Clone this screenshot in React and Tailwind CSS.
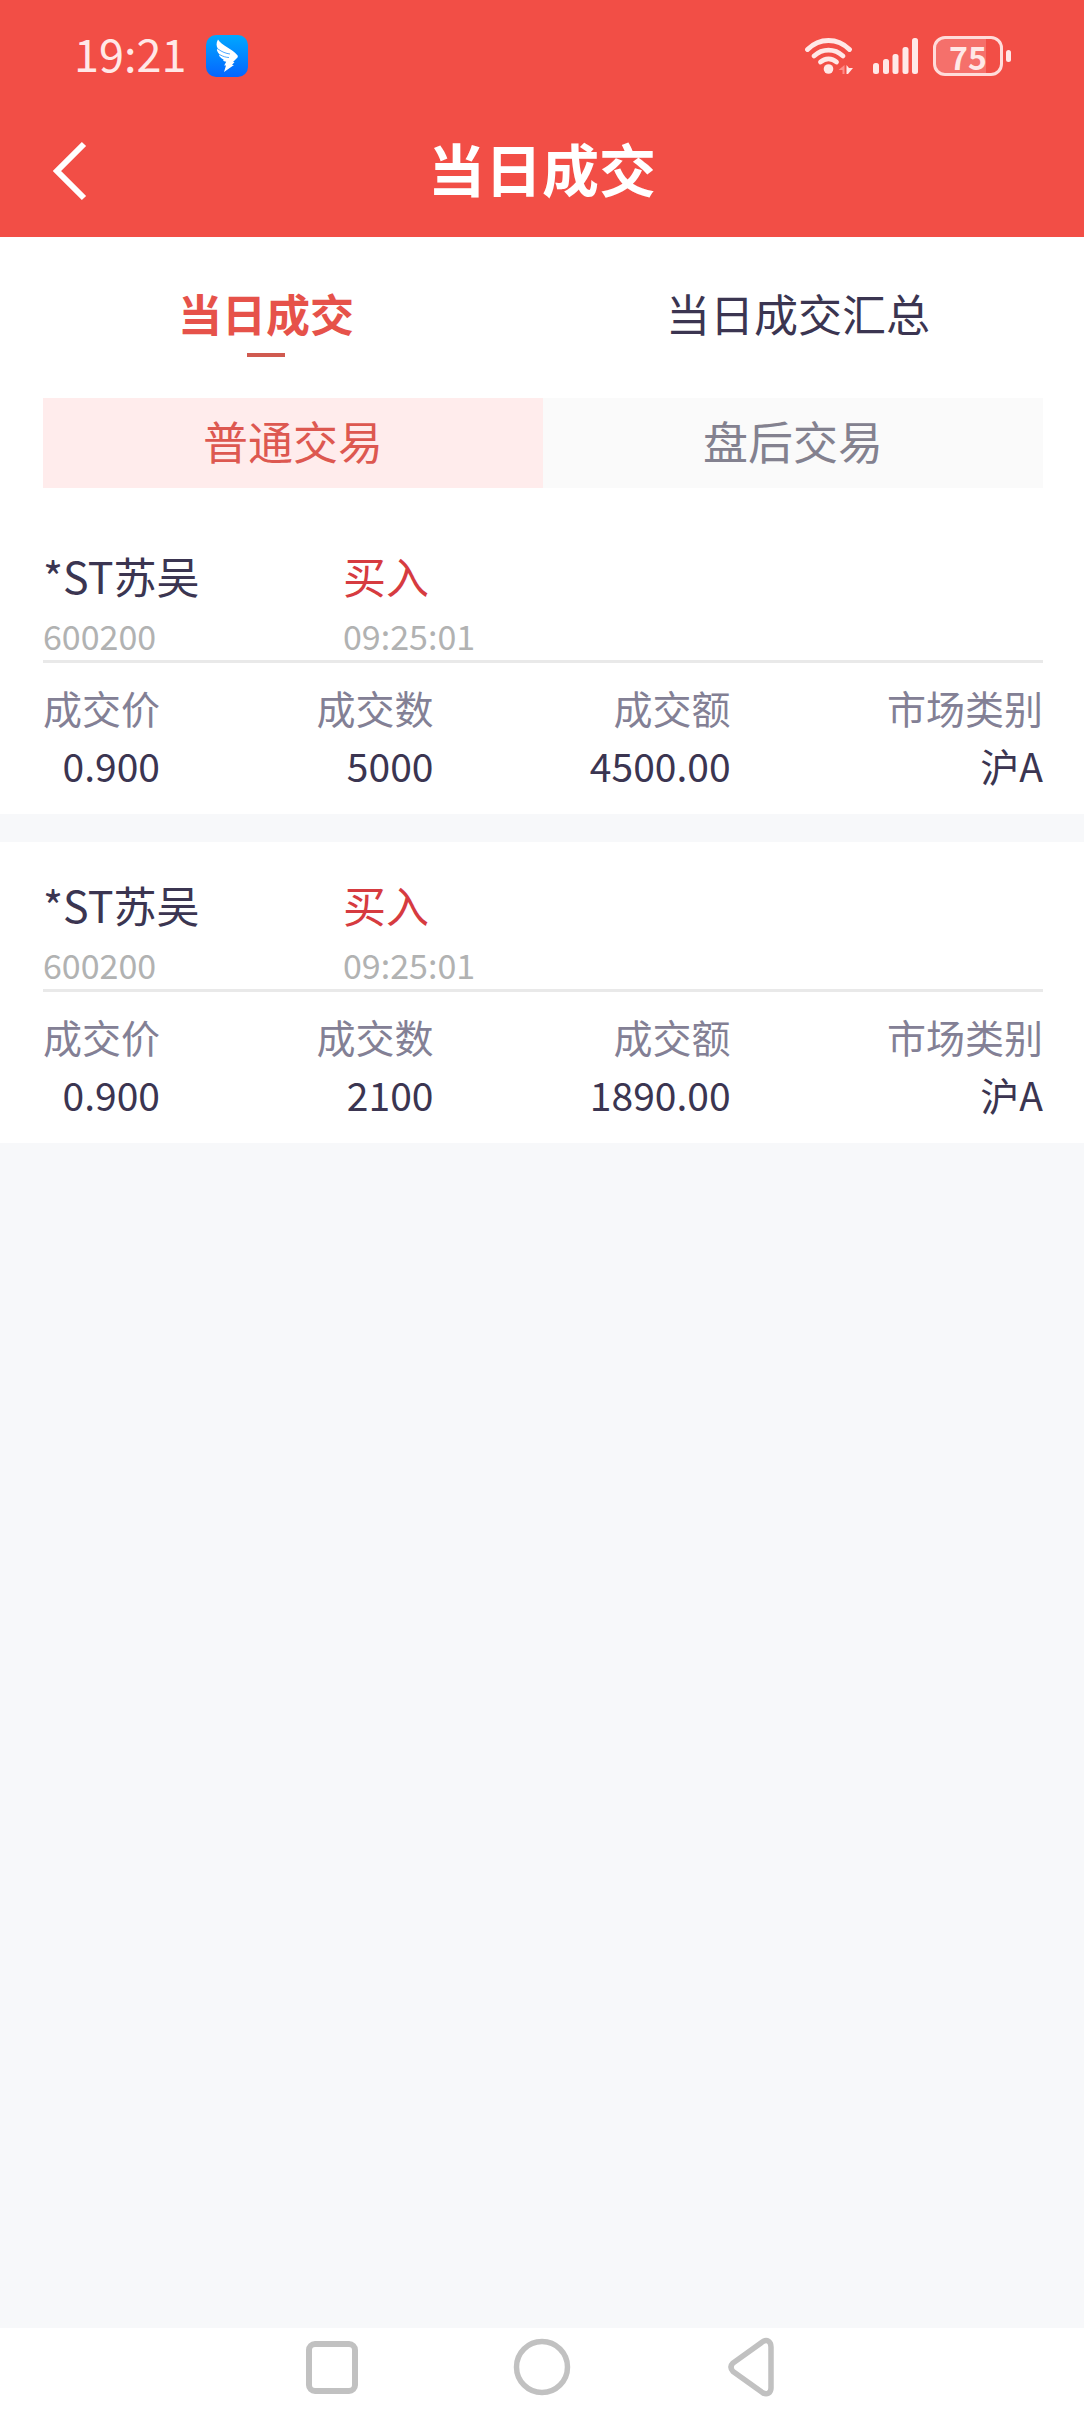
const trades = [
  { name: "*ST苏吴", code: "600200", side: "买入", time: "09:25:01", price: "0.900", count: "5000", amount: "4500.00", market: "沪A" },
  { name: "*ST苏吴", code: "600200", side: "买入", time: "09:25:01", price: "0.900", count: "2100", amount: "1890.00", market: "沪A" },
];

function BirdIcon() {
  return (
    <svg className="h-[42px] w-[42px]" viewBox="0 0 42 42" aria-hidden="true">
      <defs>
        <linearGradient id="bird-bg" x1="0" y1="0" x2="0" y2="1">
          <stop offset="0" stopColor="#00a8ff" />
          <stop offset="1" stopColor="#0565ff" />
        </linearGradient>
      </defs>
      <rect width="42" height="42" rx="10" fill="url(#bird-bg)" />
      <path
        fill="#fff"
        d="M12 4.500C10 8 10.200 11 12 14c-1 .3-1.300.8-1 1.500.5 1.500 1.500 3 3 4.300-1 .4-1 .9-.3 1.700 1 1.300 2.300 2.400 4 3.200-.8.5-.5 1.200.5 1.500l2 .6-2 3.700h1.800l-2 6.500L28 30h-2l2.500-3h-1.500l4.500-4.500c.5-.8.400-1.700-.3-2.500C26 13.500 16 11 12 4.500z"
      />
      <path d="M12 14c4 3 8 4.500 12 5M14 19.800c3 1.700 6 2.600 9 2.700" fill="none" stroke="#1f92ff" strokeWidth=".8" />
    </svg>
  );
}

function WifiIcon() {
  return (
    <svg className="h-[38px] w-[48px]" viewBox="0 0 48 38" aria-hidden="true">
      <g fill="none" stroke="#ffe8e7" strokeWidth="4.800" strokeLinecap="round">
        <path d="M2.500 12.500C14.500.500 32.500.500 44.500 12.500" />
        <path d="M9 19C17.500 11.200 29.500 11.200 38 19" />
        <path d="M15.500 25C20 20.700 27 20.700 31.500 25" />
      </g>
      <circle cx="23.500" cy="32" r="4.800" fill="#ffe8e7" />
      <path d="M39.500 28v9h-2v-4h-4z" fill="#ff8c88" />
      <path d="M41.500 28v9h1.500l5-6h-4z" fill="#ffe8e7" />
    </svg>
  );
}

function SignalIcon() {
  return (
    <svg className="h-[38px] w-[46px]" viewBox="0 0 46 38" fill="#ffe8e7" aria-hidden="true">
      <rect x="0" y="26" width="6" height="11" rx="2.500" />
      <rect x="10" y="22" width="6" height="15" rx="2.500" />
      <rect x="19.500" y="17" width="6" height="20" rx="2.500" />
      <rect x="29.500" y="10" width="6" height="27" rx="2.500" />
      <rect x="39" y="1" width="6" height="36" rx="2.500" />
    </svg>
  );
}

function Battery() {
  return (
    <div className="flex items-center gap-[3px]">
      <div className="flex h-10 w-[70px] items-center justify-center rounded-[12px] border-3 border-[#ffdcda] bg-linear-to-r from-[#f5706b] from-78% to-transparent to-78% text-[32px] leading-none font-bold text-[#ffe8e7]">
        75
      </div>
      <div className="h-3 w-[5px] rounded-full bg-[#ffe8e7]" />
    </div>
  );
}

function Trade({ trade }) {
  const fields = [
    ["成交价", trade.price],
    ["成交数", trade.count],
    ["成交额", trade.amount],
    ["市场类别", trade.market],
  ];
  return (
    <li className="bg-white pt-[25px] pr-[41px] pb-5 pl-[43px]">
      <div className="flex border-b-3 border-[#e9e9e9]">
        <div className="w-3/10">
          <div className="text-[43px] leading-[74px] text-[#3b3551]">{trade.name}</div>
          <div className="text-[34px] leading-[48px] text-[#b1b2b2]">{trade.code}</div>
        </div>
        <div>
          <div className="text-[43px] leading-[74px] text-[#d63b40]">{trade.side}</div>
          <div className="text-[34px] leading-[48px] text-[#b1b2b2]">{trade.time}</div>
        </div>
      </div>
      <dl className="flex justify-between pt-[15px] text-right text-[39px] leading-[58px]">
        {fields.map(([label, value]) => (
          <div key={label}>
            <dt className="text-[#838095]">{label}</dt>
            <dd className="text-[#3b3551]">{value}</dd>
          </div>
        ))}
      </dl>
    </li>
  );
}

export default function App() {
  return (
    <div className="flex min-h-screen flex-col bg-[#f7f8fa] font-['Noto_Sans_CJK_SC',sans-serif]">
      <header className="bg-[#f24e46]">
        <div className="flex h-[104px] items-center justify-between pt-2 pr-[73px] pl-[74px]">
          <div className="flex items-center gap-5">
            <time className="pb-2 text-[45px] leading-none text-[#ffe8e7]">19:21</time>
            <BirdIcon />
          </div>
          <div className="flex items-center">
            <WifiIcon />
            <div className="pl-5">
              <SignalIcon />
            </div>
            <div className="pl-[14px]">
              <Battery />
            </div>
          </div>
        </div>
        <div className="grid h-[133px] grid-cols-[1fr_auto_1fr] items-center px-[50px]">
          <button type="button" aria-label="返回" className="justify-self-start">
            <svg className="h-[60px] w-10" viewBox="0 0 40 60" fill="none" stroke="#fff" strokeWidth="6" aria-hidden="true">
              <path d="M34 3 7 30 34 57" />
            </svg>
          </button>
          <h1 className="pb-[6px] text-[57px] leading-none font-bold text-white">当日成交</h1>
        </div>
      </header>

      <main className="flex-1">
        <div className="bg-white pb-[25px]">
          <nav className="grid grid-cols-2 pt-11 pr-5 pb-[41px] text-[44px] leading-[64px]">
            <button type="button" className="flex flex-col items-center gap-2 font-bold text-[#e6524a]">
              当日成交
              <span className="h-1 w-[38px] bg-[#d05a50]" />
            </button>
            <button type="button" className="flex flex-col items-center text-[#3b3551]">当日成交汇总</button>
          </nav>
          <div className="grid h-[90px] grid-cols-2 pr-[41px] pl-[43px] text-[45px] leading-none">
            <button type="button" className="bg-[#ffecec] pb-[6px] text-[#dd5850]">普通交易</button>
            <button type="button" className="bg-[#fafafa] pb-[6px] text-[#83818f]">盘后交易</button>
          </div>
        </div>
        <ul className="flex flex-col gap-7">
          {trades.map((trade) => (
            <Trade key={trade.count} trade={trade} />
          ))}
        </ul>
      </main>

      <footer className="flex h-[84px] items-center justify-center gap-[152px] bg-white pb-[6px] text-[#c1c1c1]">
        <button type="button" aria-label="最近任务">
          <svg className="h-[60px] w-[58px]" viewBox="0 0 58 60" fill="none" stroke="currentColor" strokeWidth="6" aria-hidden="true">
            <rect x="6" y="7" width="46" height="47" rx="6" />
          </svg>
        </button>
        <button type="button" aria-label="主屏幕">
          <svg className="h-[60px] w-[58px]" viewBox="0 0 58 60" fill="none" stroke="currentColor" strokeWidth="5.500" aria-hidden="true">
            <circle cx="29" cy="30" r="25.500" />
          </svg>
        </button>
        <button type="button" aria-label="返回上一页">
          <svg className="h-[60px] w-[58px]" viewBox="0 0 58 60" fill="none" stroke="currentColor" strokeWidth="5.500" aria-hidden="true">
            <path d="M40 4.500 10 26Q6 30 10 34.500L40 56C44 58 48 56 48 51V10C48 4.500 44 2 40 4.500Z" />
          </svg>
        </button>
      </footer>
    </div>
  );
}
